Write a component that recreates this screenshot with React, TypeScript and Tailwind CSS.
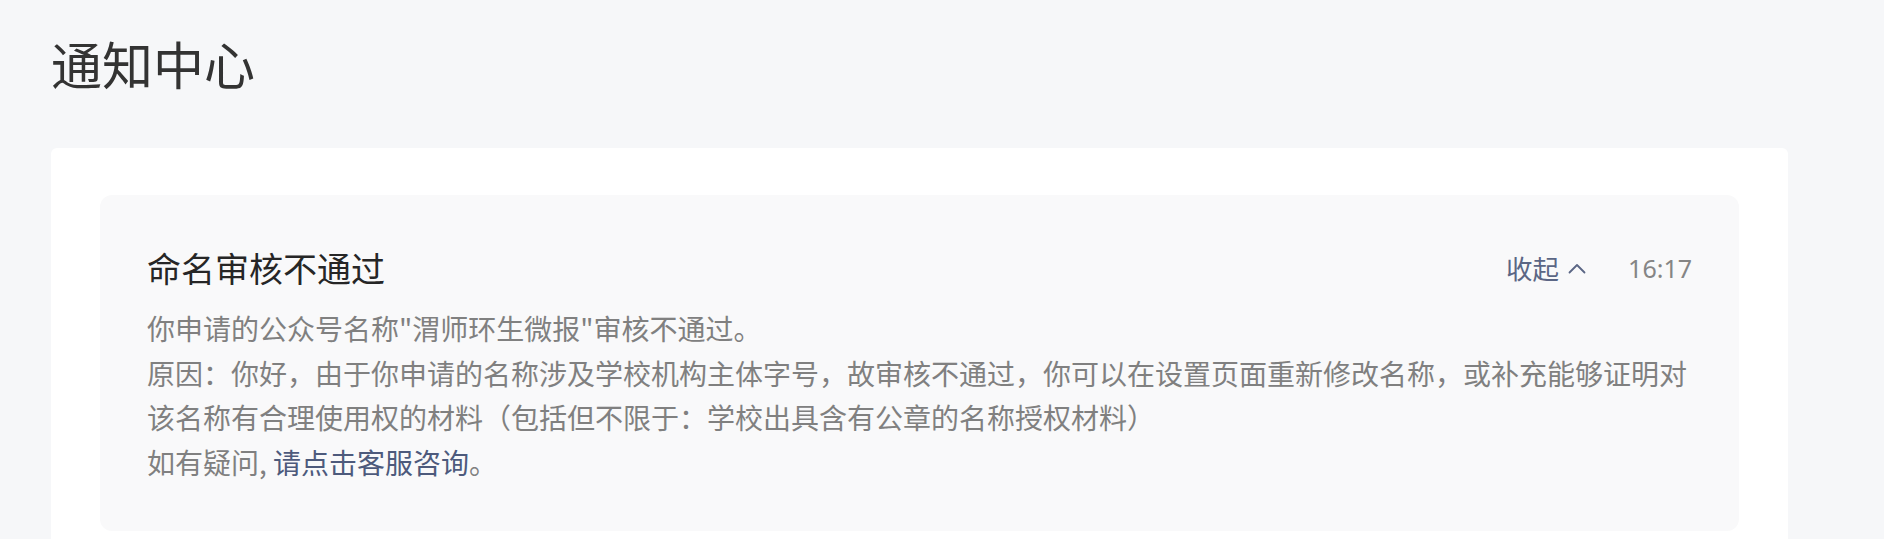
import { useState } from 'react';

const cjk = '"Noto Sans CJK SC", "Noto Sans", sans-serif';

interface Notice {
  title: string;
  time: string;
}

function ChevronUp() {
  return (
    <svg width="18" height="11" viewBox="0 0 18 11" fill="none" className="ml-[9px]">
      <polyline points="1.5,9.5 9,2 16.5,9.5" stroke="currentColor" strokeWidth="1.8" strokeLinecap="round" strokeLinejoin="round" />
    </svg>
  );
}

function NoticeCard({ notice }: { notice: Notice }) {
  const [open, setOpen] = useState(true);

  return (
    <div className="rounded-[12px] bg-[#f9f9fa] px-[47px] pt-[48px] pb-[47px]">
      <div className="flex items-center">
        <h2 className="flex-1 text-[34px] leading-[50px] text-[#262626]">{notice.title}</h2>
        <button
          onClick={() => setOpen(!open)}
          className="flex items-center text-[26.5px] leading-[50px] text-[#5b6685]"
        >
          收起
          <ChevronUp />
        </button>
        <span
          className="ml-[42px] text-[25px] leading-[50px] text-[#858585]"
          style={{ fontFamily: '"Noto Sans", sans-serif' }}
        >
          {notice.time}
        </span>
      </div>

      {open && (
        <div className="mt-[13px] text-[28px] leading-[44.5px] text-[#808080]">
          <p>你申请的公众号名称"渭师环生微报"审核不通过。</p>
          <p>
            原因：你好，由于你申请的名称涉及学校机构主体字号，故审核不通过，你可以在设置页面重新修改名称，或补充能够证明对该名称有合理使用权的材料（包括但不限于：学校出具含有公章的名称授权材料）
          </p>
          <p>
            如有疑问, <a className="text-[#4d5a7c] cursor-pointer">请点击客服咨询</a>。
          </p>
        </div>
      )}
    </div>
  );
}

export default function App() {
  const notice: Notice = { title: '命名审核不通过', time: '16:17' };

  return (
    <div className="min-h-screen bg-[#f6f7f9] pl-[51px] pt-[26px]" style={{ fontFamily: cjk }}>
      <h1 className="text-[51px] leading-[75px] text-[#333333]">通知中心</h1>
      <div className="mt-[47px] w-[1737px] rounded-t-[6px] bg-white px-[49px] pt-[47px] pb-[40px]">
        <NoticeCard notice={notice} />
      </div>
    </div>
  );
}
